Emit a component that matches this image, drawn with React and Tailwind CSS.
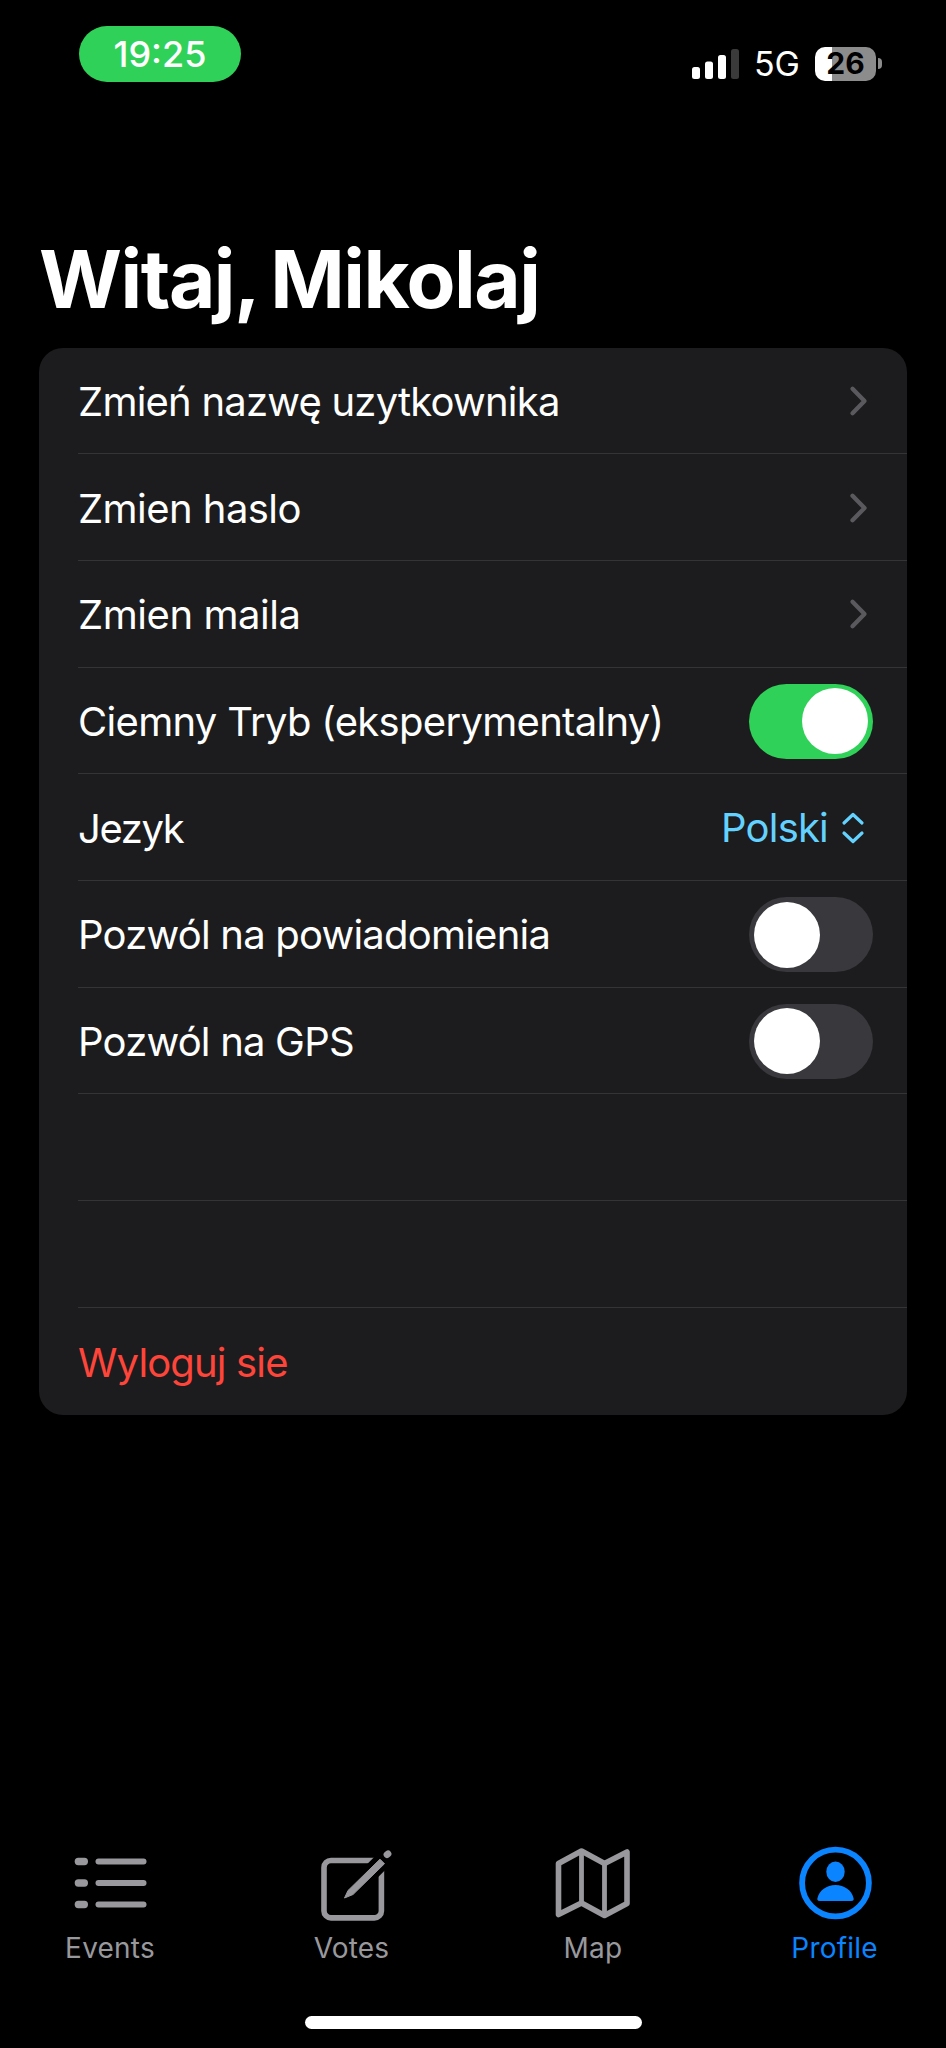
function Toggle({ on }) {
  return (
    <div className={`mr-[34px] mt-[2px] flex h-[75px] w-[124px] items-center rounded-full ${on ? "justify-end bg-[#30d158] pr-[5px]" : "justify-start bg-[#39393d] pl-[5px]"}`}>
      <div className="size-[66px] rounded-full bg-white" />
    </div>
  );
}

function Chevron() {
  return (
    <svg className="mr-[38px] mt-[1px] h-[32px] w-[20px]" viewBox="0 0 20 32" fill="none" stroke="#5a5a5e" strokeWidth="4.300" strokeLinecap="round" strokeLinejoin="round">
      <path d="M3.5 3.7 L15.5 16 L3.5 28.3" />
    </svg>
  );
}

function LanguagePicker() {
  return (
    <div className="mr-[42px] mt-[1px] flex items-center gap-[13px] text-[#64d2ff]">
      <span className="text-[40px] leading-[48px] tracking-[-0.8px]">Polski</span>
      <svg className="h-[34px] w-[24px]" viewBox="0 0 24 34" fill="none" stroke="currentColor" strokeWidth="3.200" strokeLinecap="round" strokeLinejoin="round">
        <path d="M3 12 L12 3.5 L21 12 M3 22 L12 30.5 L21 22" />
      </svg>
    </div>
  );
}

const rows = [
  { label: "Zmień nazwę uzytkownika", spacing: "tracking-[-0.78px]", control: <Chevron /> },
  { label: "Zmien haslo", spacing: "tracking-[-0.55px]", control: <Chevron /> },
  { label: "Zmien maila", spacing: "tracking-[-0.45px]", control: <Chevron /> },
  { label: "Ciemny Tryb (eksperymentalny)", spacing: "tracking-[-0.7px]", control: <Toggle on /> },
  { label: "Jezyk", spacing: "tracking-[-1.4px]", control: <LanguagePicker /> },
  { label: "Pozwól na powiadomienia", spacing: "tracking-[-0.78px]", control: <Toggle /> },
  { label: "Pozwól na GPS", spacing: "tracking-[-0.8px]", control: <Toggle /> },
  { label: "" },
  { label: "" },
  { label: "Wyloguj sie", spacing: "tracking-[-0.85px]", danger: true },
];

function EventsIcon() {
  return (
    <svg className="h-[80px] w-[80px]" viewBox="0 0 80 80" fill="currentColor">
      <rect x="4.700" y="11.800" width="13.300" height="7.400" rx="3.600" />
      <rect x="4.700" y="33.300" width="13.300" height="7.400" rx="3.600" />
      <rect x="4.700" y="54.800" width="13.300" height="7.400" rx="3.600" />
      <rect x="25.500" y="12.500" width="51" height="6" rx="3" />
      <rect x="25.500" y="34" width="51" height="6" rx="3" />
      <rect x="25.500" y="55.500" width="51" height="6" rx="3" />
    </svg>
  );
}

function VotesIcon() {
  return (
    <svg className="h-[80px] w-[80px]" viewBox="0 0 80 80">
      <rect x="12" y="14.500" width="57.400" height="57.400" rx="7" fill="none" stroke="currentColor" strokeWidth="5.600" />
      <path d="M76 9.200 L50 35.200" stroke="#000" strokeWidth="17" />
      <path d="M68 13.200 L72.500 17.700 L41 48.500 L32.500 52 L36 44.500 Z" fill="currentColor" stroke="currentColor" strokeWidth="1" strokeLinejoin="round" />
      <path d="M75 8.700 L76 7.900" stroke="currentColor" strokeWidth="6.800" strokeLinecap="round" />
    </svg>
  );
}

function MapIcon() {
  return (
    <svg className="h-[80px] w-[80px]" viewBox="0 0 80 80" fill="none" stroke="currentColor" strokeWidth="5.600" strokeLinejoin="round">
      <path d="M5.500 17.500 L28.500 5 L51.500 17.500 L74 6 V57.500 L51.500 69.500 L28.500 57 L5.500 68.500 Z" />
      <path d="M28.500 5 V57 M51.500 17.500 V69.500" strokeWidth="4.800" />
    </svg>
  );
}

function ProfileIcon() {
  return (
    <svg className="h-[80px] w-[80px]" viewBox="0 0 80 80" fill="currentColor">
      <circle cx="40.500" cy="37" r="33.400" fill="none" stroke="currentColor" strokeWidth="5.800" />
      <ellipse cx="40.500" cy="25.700" rx="9.200" ry="10.200" />
      <path d="M24.800 55 C22.300 55 22 53.500 22.500 52 C24.300 44.500 31.500 39 40.500 39 C49.500 39 56.800 44.500 58.500 52 C59 53.500 58.700 55 56.300 55 Z" />
    </svg>
  );
}

const tabs = [
  { label: "Events", icon: <EventsIcon /> },
  { label: "Votes", icon: <VotesIcon /> },
  { label: "Map", icon: <MapIcon /> },
  { label: "Profile", icon: <ProfileIcon />, active: true },
];

export default function App() {
  return (
    <div className="flex h-[2048px] w-[946px] flex-col bg-black font-['Inter',sans-serif] text-white">
      <header className="flex h-[106px] shrink-0 items-start justify-between pl-[79px] pr-[64px] pt-[26px]">
        <div className="flex h-[56px] w-[162px] items-center justify-center rounded-full bg-[#30d158]">
          <span className="text-[36px] font-medium leading-none">19:25</span>
        </div>
        <div className="flex items-center pt-[20px]">
          <svg className="mr-[14px] h-[34px] w-[48px]" viewBox="0 0 48 34" fill="#fff">
            <rect x="0" y="20" width="8" height="12" rx="2.500" />
            <rect x="13" y="14.500" width="8" height="17.500" rx="2.500" />
            <rect x="26" y="8" width="8" height="24" rx="2.500" />
            <rect x="39" y="2" width="8" height="30" rx="2.500" fill="#3a3a3a" />
          </svg>
          <span className="mt-[1px] text-[34px] leading-[34px]">5G</span>
          <div className="ml-[15px] flex h-[34px] w-[61px] items-center justify-center rounded-[10px] bg-[linear-gradient(to_right,#fff_16.5px,#8c8c8c_16.5px)]">
            <span className="-mt-[1px] text-[30px] font-bold leading-none text-black">26</span>
          </div>
          <div className="ml-[2px] h-[11px] w-[4px] rounded-r-full bg-[#8c8c8c]" />
        </div>
      </header>
      <h1 className="mt-[125px] h-[116.500px] shrink-0 whitespace-nowrap pl-[39px] text-[80px] font-bold leading-[96px] tracking-[-1.5px] [word-spacing:-4px]">Witaj, Mikolaj</h1>
      <main className="mx-[39px] h-[1067px] shrink-0 overflow-hidden rounded-[24px] bg-[#1c1c1e]">
        {rows.map((row, i) => (
          <div key={i} className="flex h-[106.700px] pl-[39px]">
            <div className={`flex flex-1 items-center justify-between ${i < rows.length - 1 ? "border-b border-[#343437]" : ""}`}>
              <span className={`mt-[3px] whitespace-nowrap text-[40px] leading-[48px] ${row.spacing ?? ""} ${row.danger ? "text-[#ff453a]" : "text-white"}`}>{row.label}</span>
              {row.control}
            </div>
          </div>
        ))}
      </main>
      <nav className="mt-auto flex h-[170px] shrink-0 justify-between pl-[30px] pr-[31.500px]">
        {tabs.map((tab) => (
          <div key={tab.label} className={`flex w-[160px] flex-col items-center gap-[5px] ${tab.active ? "text-[#0a84ff]" : "text-[#98989d]"}`}>
            {tab.icon}
            <span className="text-[28px] leading-[34px] tracking-[0.2px]">{tab.label}</span>
          </div>
        ))}
      </nav>
      <div className="mx-auto mb-[19px] h-[13px] w-[337px] shrink-0 rounded-full bg-white" />
    </div>
  );
}
